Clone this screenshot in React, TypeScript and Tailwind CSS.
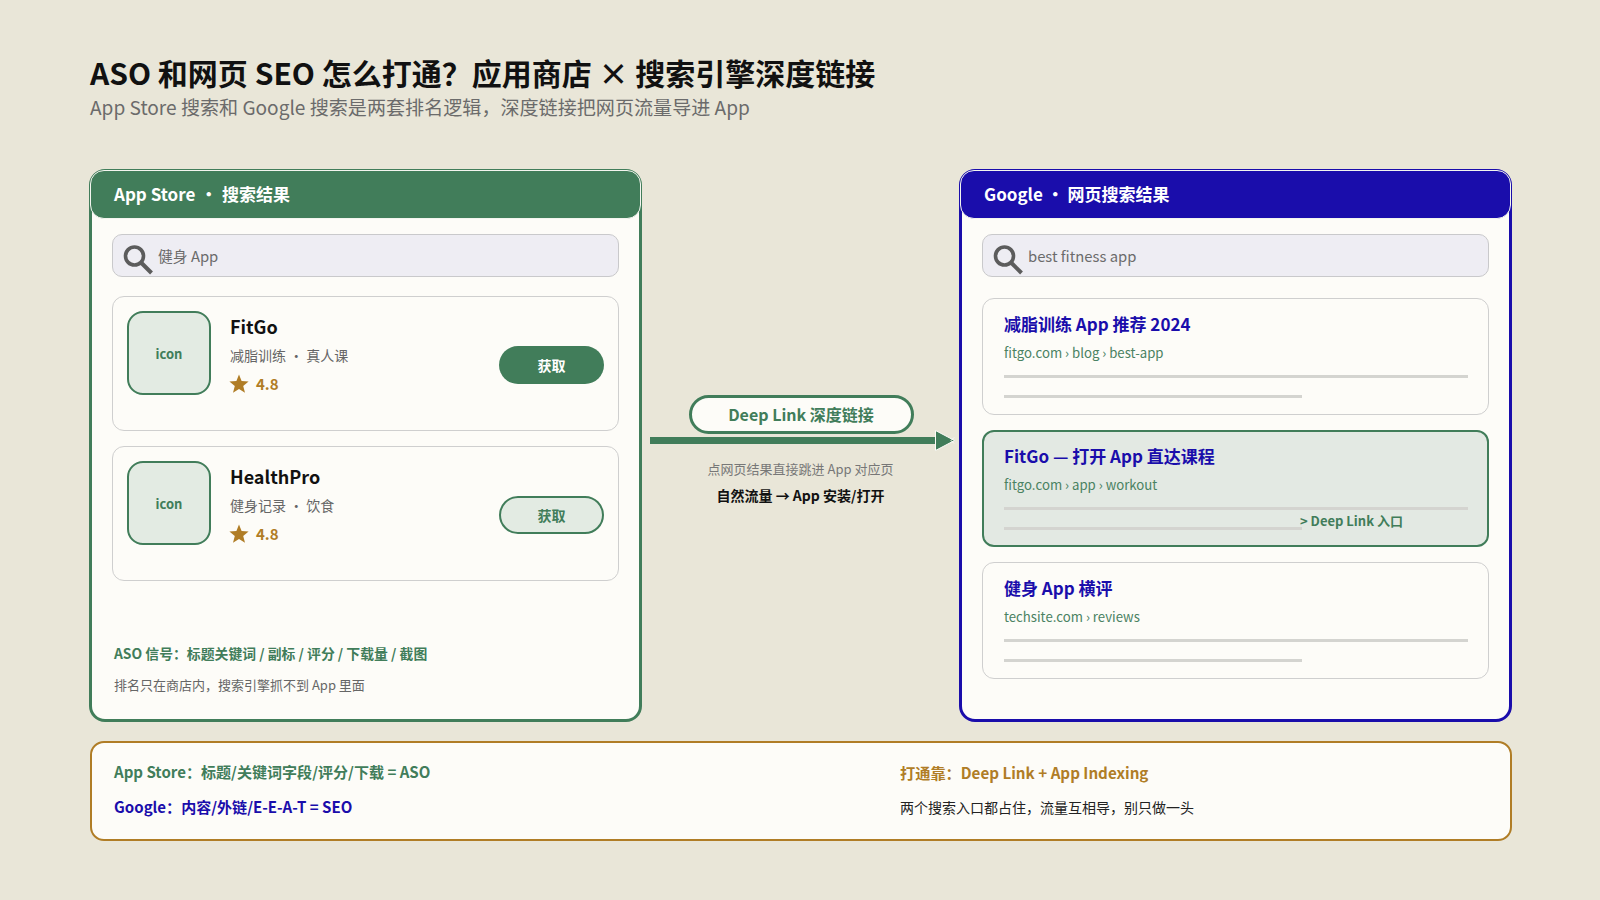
import React from "react";

function Search({ text }: { text: string }) {
  return (
    <div className="h-[43px] rounded-[10px] border border-[#c9c9cb] bg-[#eeedf3] flex items-center pl-[10px]">
      <svg width="32" height="32" viewBox="0 0 32 32" className="shrink-0 overflow-visible" fill="none">
        <circle cx="11.5" cy="16" r="9" stroke="#5c5c5c" strokeWidth="3.6" />
        <line x1="18" y1="22.5" x2="28.5" y2="33" stroke="#5c5c5c" strokeWidth="4" />
      </svg>
      <span className="ml-[3px] mt-[1px] text-[14.8px] text-[#6b6b6b]">{text}</span>
    </div>
  );
}

function Star() {
  return (
    <svg width="20" height="20" viewBox="0 0 20 20" className="shrink-0">
      <path d="M10 0.5 L12.6 7 L19.6 7.4 L14.2 11.9 L16 18.8 L10 15 L4 18.8 L5.8 11.9 L0.4 7.4 L7.4 7 Z" fill="#b07d26" />
    </svg>
  );
}

function AppCard({ name, desc, filled }: { name: string; desc: string; filled?: boolean }) {
  return (
    <div className="h-[135px] rounded-[12px] border border-[#cfcfcf] flex pl-[14px] pr-[14px] pt-[14px]">
      <div className="w-[84px] h-[84px] pt-[2px] rounded-[16px] border-2 border-[#417d5a] bg-[#e3ebe3] flex items-center justify-center text-[13px] font-bold text-[#417d5a] shrink-0">
        icon
      </div>
      <div className="ml-[19px] flex-1 flex flex-col">
        <div className="text-[18px] font-bold leading-[28px] text-[#111] mt-[1px]">{name}</div>
        <div className="text-[14px] leading-[20px] text-[#666] mt-[5px]">{desc}</div>
        <div className="flex items-center mt-[8px] -ml-[1px]">
          <Star />
          <span className="ml-[7px] text-[15px] font-bold text-[#b07d26]">4.8</span>
        </div>
      </div>
      <div
        className={
          filled
            ? "mt-[35px] w-[105px] h-[38px] rounded-full bg-[#417d5a] text-white text-[14px] font-bold flex items-center justify-center"
            : "mt-[35px] w-[105px] h-[38px] rounded-full border-2 border-[#417d5a] bg-[#e3ebe3] text-[#417d5a] text-[14px] font-bold flex items-center justify-center"
        }
      >
        获取
      </div>
    </div>
  );
}

function Result({ title, url, hl }: { title: string; url: string; hl?: boolean }) {
  return (
    <div
      className={
        hl
          ? "relative h-[117px] rounded-[12px] border-2 border-[#417d5a] bg-[#e3e9e3] pl-[20px] pr-[20px] pt-[11px]"
          : "relative h-[117px] rounded-[12px] border border-[#cfcfcf] pl-[21px] pr-[21px] pt-[12px]"
      }
    >
      <div className="text-[17px] font-bold leading-[26px] text-[#1a0dab]">{title}</div>
      <div className="text-[13.2px] leading-[20px] text-[#4a8262] mt-[6px]">{url}</div>
      <div className="h-[3px] bg-[#d4d4d0] w-[464px] mt-[12px]" />
      <div className="h-[3px] bg-[#d4d4d0] w-[298px] mt-[17px]" />
      {hl && (
        <div className="absolute left-[316px] top-[79px] text-[13px] font-bold leading-[20px] text-[#417d5a]">
          &gt; Deep Link 入口
        </div>
      )}
    </div>
  );
}

export default function App() {
  return (
    <div className="w-[1600px] h-[900px] overflow-hidden bg-[#e9e6d8] pl-[90px] pr-[88px] pt-[49px] font-['Noto_Sans_CJK_SC',sans-serif]">
      <h1 className="text-[30px] font-bold leading-[46px] text-[#111]">ASO 和网页 SEO 怎么打通？应用商店 × 搜索引擎深度链接</h1>
      <p className="text-[19.08px] leading-[28px] text-[#6b6b6b] -mt-[2px]">App Store 搜索和 Google 搜索是两套排名逻辑，深度链接把网页流量导进 App</p>

      <div className="flex mt-[48px] -ml-[1px] h-[553px]">
        <div className="w-[553px] rounded-[16px] border-[3px] border-[#417d5a] bg-[#fdfcf8] flex flex-col">
          <div className="-mx-[2px] -mt-[2px] h-[49px] rounded-[14px] border border-[#f3f5ef] bg-[#417d5a] flex items-center pl-[23px] pb-[2px] text-[17px] font-bold text-white shrink-0">
            <span>
              App Store <span className="mx-[1px]">·</span> 搜索结果
            </span>
          </div>
          <div className="px-[20px] pt-[15px] flex flex-col flex-1">
            <Search text="健身 App" />
            <div className="mt-[19px] flex flex-col gap-[15px]">
              <AppCard name="FitGo" desc="减脂训练 · 真人课" filled />
              <AppCard name="HealthPro" desc="健身记录 · 饮食" />
            </div>
            <div className="mt-[61px] pl-[2px] text-[13.85px] font-bold leading-[22px] text-[#417d5a]">
              ASO 信号：标题关键词 / 副标 / 评分 / 下载量 / 截图
            </div>
            <div className="mt-[11px] pl-[2px] text-[13px] leading-[20px] text-[#666]">
              排名只在商店内，搜索引擎抓不到 App 里面
            </div>
          </div>
        </div>

        <div className="flex-1 flex flex-col items-center pt-[226px]">
          <div className="ml-[1px] w-[225px] h-[39px] pb-[2px] rounded-full border-[3px] border-[#417d5a] bg-[#fdfcf8] flex items-center justify-center text-[16px] font-bold text-[#417d5a]">
            Deep Link 深度链接
          </div>
          <div className="self-start ml-[8px] -mt-[4px] flex items-center h-[20px]">
            <div className="w-[285px] h-[7px] bg-[#417d5a]" />
            <svg width="20" height="21" viewBox="0 0 20 21" className="block overflow-visible">
              <path d="M0.5 0.5 L19.5 10.5 L0.5 20.5 Z" fill="#417d5a" stroke="#fdfcf8" strokeWidth="1" />
              <path d="M19 7.5 L16 10.5 L19 13.5" fill="none" stroke="#fdfcf8" strokeWidth="1" />
            </svg>
          </div>
          <div className="mt-[9px] text-[13px] leading-[20px] text-[#777]">点网页结果直接跳进 App 对应页</div>
          <div className="mt-[6px] text-[14px] font-bold leading-[20px] text-[#111]">自然流量 → App 安装/打开</div>
        </div>

        <div className="w-[553px] rounded-[16px] border-[3px] border-[#1a0dab] bg-[#fdfcf8] flex flex-col">
          <div className="-mx-[2px] -mt-[2px] h-[49px] rounded-[14px] border border-[#f3f5ef] bg-[#1a0dab] flex items-center pl-[23px] pb-[2px] text-[17px] font-bold text-white shrink-0">
            <span>Google · 网页搜索结果</span>
          </div>
          <div className="px-[20px] pt-[15px] flex flex-col flex-1">
            <Search text="best fitness app" />
            <div className="mt-[21px] flex flex-col gap-[15px]">
              <Result title="减脂训练 App 推荐 2024" url="fitgo.com › blog › best-app" />
              <Result title="FitGo — 打开 App 直达课程" url="fitgo.com › app › workout" hl />
              <Result title="健身 App 横评" url="techsite.com › reviews" />
            </div>
          </div>
        </div>
      </div>

      <div className="mt-[19px] h-[100px] rounded-[14px] border-2 border-[#b07d26] bg-[#fdfcf8] flex pl-[22px]">
        <div className="w-[786px] pt-[17px]">
          <div className="text-[15.05px] font-bold leading-[24px] text-[#417d5a]">App Store：标题/关键词字段/评分/下载 = ASO</div>
          <div className="mt-[11px] text-[15.05px] font-bold leading-[24px] text-[#1a0dab]">Google：内容/外链/E-E-A-T = SEO</div>
        </div>
        <div className="pt-[17px]">
          <div className="text-[15.2px] font-bold leading-[24px] text-[#b07d26]">打通靠：Deep Link + App Indexing</div>
          <div className="mt-[11px] text-[14px] leading-[24px] text-[#222]">两个搜索入口都占住，流量互相导，别只做一头</div>
        </div>
      </div>
    </div>
  );
}
